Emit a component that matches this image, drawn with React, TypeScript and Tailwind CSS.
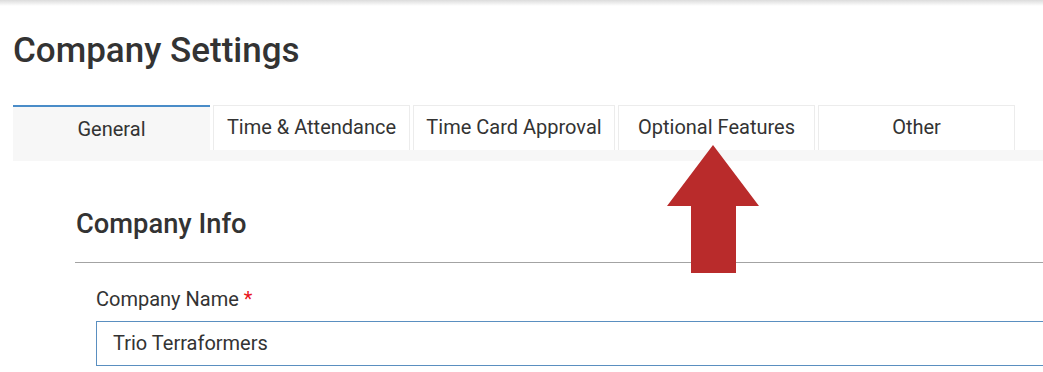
import React from "react"

const tabs = [
  { label: "General", width: "w-[197px]", active: true },
  { label: "Time & Attendance", width: "w-[197px]", active: false },
  { label: "Time Card Approval", width: "w-[202px]", active: false },
  { label: "Optional Features", width: "w-[197px]", active: false },
  { label: "Other", width: "w-[197px]", active: false },
]

function UpArrow() {
  return (
    <svg
      className="absolute left-[660px] top-[140px]"
      width="106"
      height="140"
      viewBox="660 140 106 140"
    >
      <polygon
        points="713,145 759,206 736,206 736,273 691,273 691,206 667,206"
        fill="#b92b2b"
      />
    </svg>
  )
}

export default function App() {
  return (
    <div className="relative h-[372px] w-[1043px] overflow-hidden bg-white font-['Roboto',sans-serif] text-[#333]">
      {/* top shadow from header */}
      <div className="h-[6px] bg-gradient-to-b from-[#dcdcdc] to-white" />

      <h1 className="ml-[13px] mt-[25px] h-[40px] text-[35px] font-medium leading-[40px]">
        Company Settings
      </h1>

      {/* Tabs */}
      <div className="ml-[13px] mt-[34px]">
        <div className="flex h-[45px] gap-[3px]">
          {tabs.map((tab) =>
            tab.active ? (
              <div
                key={tab.label}
                className={`${tab.width} flex items-center justify-center border-t-2 border-[#4a8cc8] bg-[#f7f7f7] pt-[1px] text-[20px]`}
              >
                {tab.label}
              </div>
            ) : (
              <div
                key={tab.label}
                className={`${tab.width} flex items-center justify-center border border-b-0 border-[#ececec] bg-white pb-[2px] text-[20px]`}
              >
                {tab.label}
              </div>
            )
          )}
        </div>
        <div className="h-[11px] bg-[#f7f7f7]" />
      </div>

      {/* Company info */}
      <div className="ml-[75px] mt-[46px]">
        <h2 className="pl-px text-[27.3px] font-medium leading-[34px]">Company Info</h2>
        <div className="mt-[21px] h-px bg-[#a3a3a3]" />
        <div className="ml-[21px] mt-[24px]">
          <label className="block text-[20px] leading-[24px]">
            Company Name <span className="text-[#e8141c]">*</span>
          </label>
          <div className="mt-[10px] flex h-[45px] w-[1000px] items-center border border-[#5a8fc0] px-[16px] pb-[2px] text-[20px]">
            Trio Terraformers
          </div>
        </div>
      </div>

      <UpArrow />
    </div>
  )
}
